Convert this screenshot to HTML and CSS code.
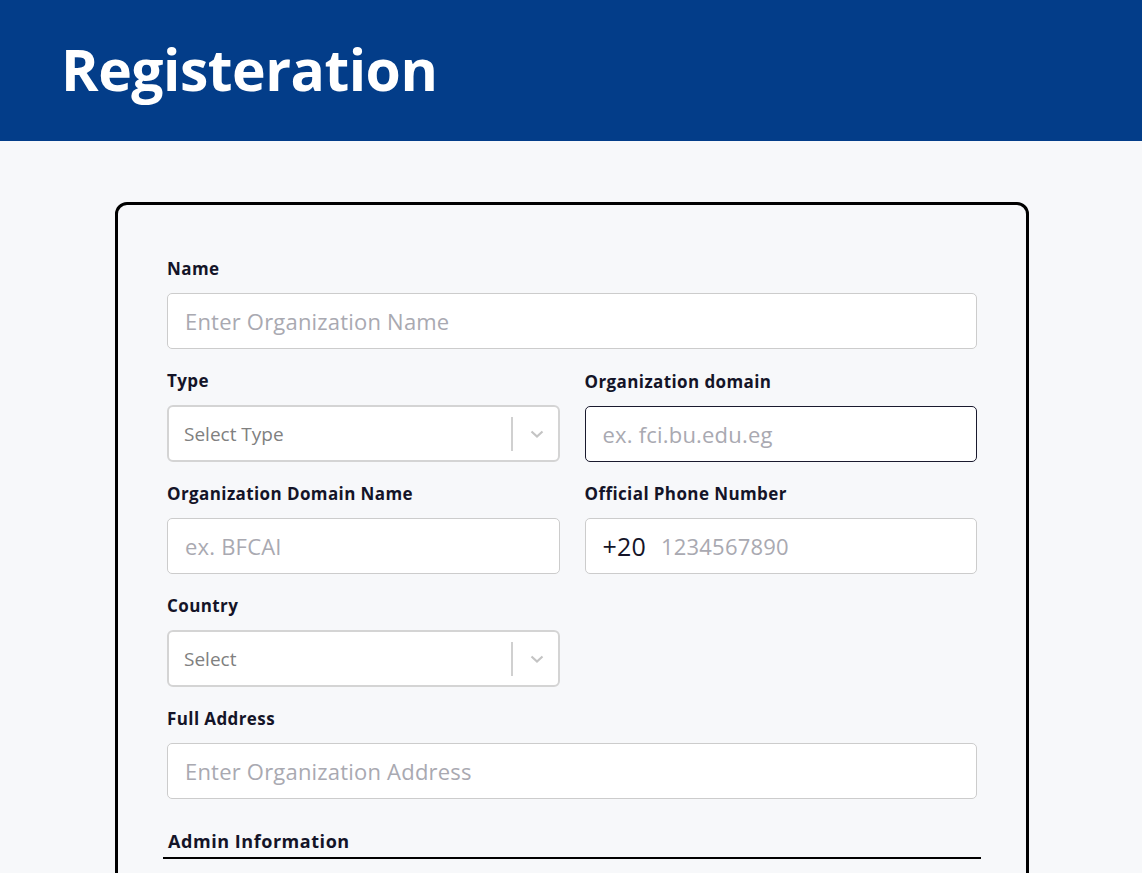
FILE: index.html
```html
<!DOCTYPE html>
<html lang="en">
<head>
<meta charset="utf-8">
<title>Registeration</title>
<link rel="stylesheet" href="styles.css">
</head>
<body>
<header class="topbar">
  <h1 class="title">Registeration</h1>
</header>
<main class="page">
  <form class="card">
    <div class="field">
      <label class="label">Name</label>
      <input class="input" type="text" placeholder="Enter Organization Name">
    </div>
    <div class="row">
      <div class="field">
        <label class="label">Type</label>
        <div class="select">
          <span class="select-text">Select Type</span>
          <span class="select-sep"></span>
          <svg class="chev" width="20" height="20" viewBox="0 0 20 20"><path d="M4.5 7.5 L10 12.5 L15.5 7.5" fill="none" stroke="#c4c4c4" stroke-width="2.2"/></svg>
        </div>
      </div>
      <div class="field">
        <label class="label">Organization domain</label>
        <input class="input focused" type="text" placeholder="ex. fci.bu.edu.eg">
      </div>
    </div>
    <div class="row">
      <div class="field">
        <label class="label">Organization Domain Name</label>
        <input class="input" type="text" placeholder="ex. BFCAI">
      </div>
      <div class="field">
        <label class="label">Official Phone Number</label>
        <div class="input phone">
          <span class="code">+20</span>
          <input class="phone-input" type="text" placeholder="1234567890">
        </div>
      </div>
    </div>
    <div class="row">
      <div class="field">
        <label class="label">Country</label>
        <div class="select">
          <span class="select-text">Select</span>
          <span class="select-sep"></span>
          <svg class="chev" width="20" height="20" viewBox="0 0 20 20"><path d="M4.5 7.5 L10 12.5 L15.5 7.5" fill="none" stroke="#c4c4c4" stroke-width="2.2"/></svg>
        </div>
      </div>
      <div></div>
    </div>
    <div class="field">
      <label class="label">Full Address</label>
      <input class="input" type="text" placeholder="Enter Organization Address">
    </div>
    <h2 class="section">Admin Information</h2>
  </form>
</main>
</body>
</html>
```
FILE: styles.css
```css
* { box-sizing: border-box; }
html, body { margin: 0; padding: 0; }
body {
  background: #f7f8fa;
  font-family: "Open Sans", "Noto Sans", sans-serif;
  color: #141428;
}
.topbar {
  background: #033d89;
  height: 141px;
  display: flex;
  align-items: center;
  padding-left: 61px;
}
.title {
  margin: 0;
  color: #ffffff;
  font-size: 57px;
  font-weight: 700;
  letter-spacing: -0.5px;
  line-height: 1;
  padding-bottom: 3px;
}
.page {
  padding: 61px 113px 0 115px;
}
.card {
  border: 3px solid #000;
  border-radius: 12px;
  padding: 52px 49px 40px 49px;
  display: flex;
  flex-direction: column;
  gap: 20px;
}
.field {
  display: flex;
  flex-direction: column;
  gap: 12px;
}
.label {
  font-size: 17px;
  font-weight: 700;
  letter-spacing: 0.4px;
  line-height: 24px;
  color: #141428;
}
.input {
  height: 56px;
  border: 1px solid #cccccc;
  border-radius: 5px;
  background: #fff;
  padding: 0 17px;
  font-family: "Open Sans", "Noto Sans", sans-serif;
  font-size: 22px;
  letter-spacing: 0.2px;
  color: #141428;
  outline: none;
  width: 100%;
}
.input::placeholder { color: #a9a9b1; }
.input.focused { border-color: #1a1a2e; }
.row {
  display: grid;
  grid-template-columns: 1fr 1fr;
  column-gap: 25px;
  align-items: end;
}
.select {
  height: 57px;
  border: 2px solid #d4d4d4;
  border-radius: 6px;
  background: #fff;
  display: flex;
  align-items: center;
  padding-left: 15px;
}
.select-text {
  flex: 1;
  font-size: 19px;
  color: #808080;
}
.select-sep {
  width: 2px;
  height: 34px;
  background: #d0d0d0;
}
.chev {
  margin: 0 11px 0 14px;
}
.phone {
  display: flex;
  align-items: center;
  gap: 15px;
}
.code {
  font-size: 25px;
  color: #141428;
}
.phone-input {
  border: none;
  outline: none;
  flex: 1;
  min-width: 0;
  font-family: "Open Sans", "Noto Sans", sans-serif;
  font-size: 22px;
  letter-spacing: 0.2px;
  padding: 0;
  background: transparent;
}
.phone-input::placeholder { color: #a9a9b1; }
.section {
  margin: 10px -4px 0 -4px;
  padding: 0 4px 4px 5px;
  font-size: 18px;
  font-weight: 700;
  letter-spacing: 0.55px;
  line-height: 24px;
  border-bottom: 2px solid #000;
  color: #141428;
}
```
